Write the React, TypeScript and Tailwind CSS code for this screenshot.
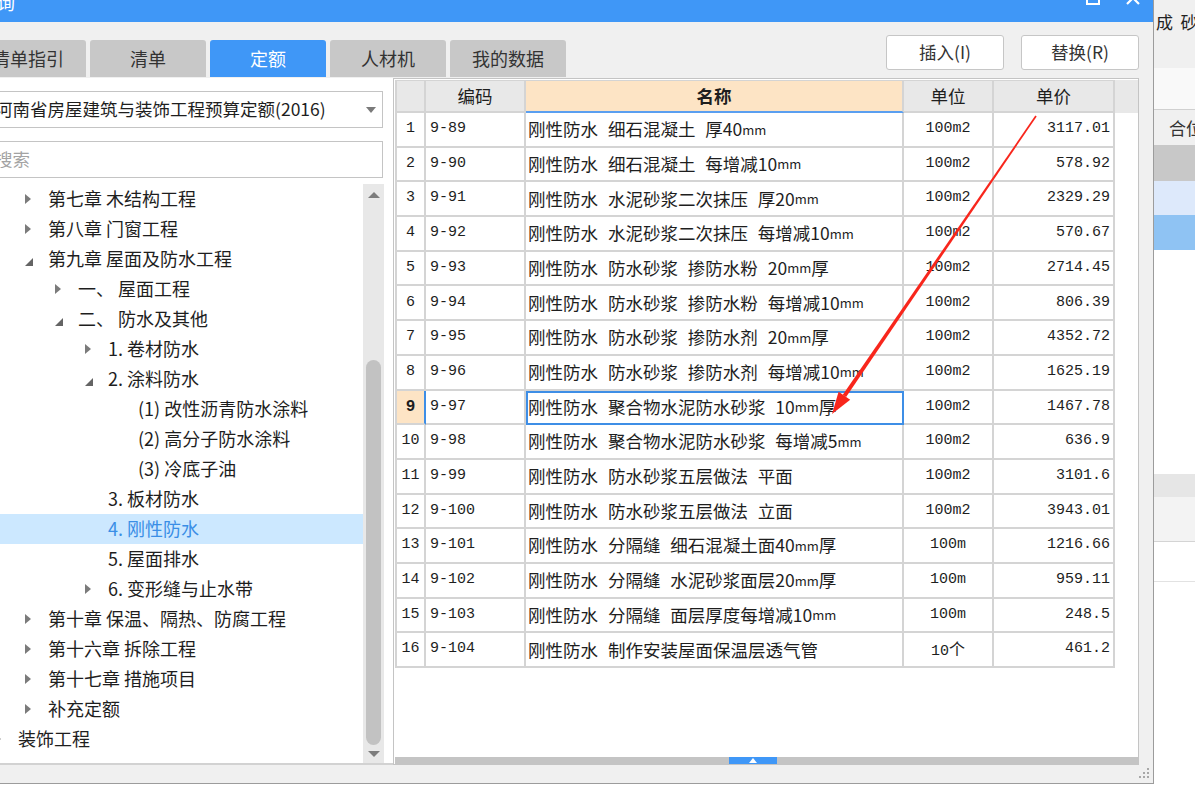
import React from "react";

type TreeNode = { level: number; arrow: "" | "r" | "d"; text: string; selected?: boolean };

const tree: TreeNode[] = [
  { level: 1, arrow: "r", text: "第七章 木结构工程" },
  { level: 1, arrow: "r", text: "第八章 门窗工程" },
  { level: 1, arrow: "d", text: "第九章 屋面及防水工程" },
  { level: 2, arrow: "r", text: "一、 屋面工程" },
  { level: 2, arrow: "d", text: "二、 防水及其他" },
  { level: 3, arrow: "r", text: "1. 卷材防水" },
  { level: 3, arrow: "d", text: "2. 涂料防水" },
  { level: 4, arrow: "", text: "(1) 改性沥青防水涂料" },
  { level: 4, arrow: "", text: "(2) 高分子防水涂料" },
  { level: 4, arrow: "", text: "(3) 冷底子油" },
  { level: 3, arrow: "", text: "3. 板材防水" },
  { level: 3, arrow: "", text: "4. 刚性防水", selected: true },
  { level: 3, arrow: "", text: "5. 屋面排水" },
  { level: 3, arrow: "r", text: "6. 变形缝与止水带" },
  { level: 1, arrow: "r", text: "第十章 保温、隔热、防腐工程" },
  { level: 1, arrow: "r", text: "第十六章 拆除工程" },
  { level: 1, arrow: "r", text: "第十七章 措施项目" },
  { level: 1, arrow: "r", text: "补充定额" },
  { level: 0, arrow: "r", text: "装饰工程" },
];

const padByLevel: Record<number, string> = {
  0: "ml-[-6px]",
  1: "pl-[24px]",
  2: "pl-[54px]",
  3: "pl-[84px]",
  4: "pl-[114px]",
};

type Row = { n: number; code: string; name: string; unit: string; price: string };

const rows: Row[] = [
  { n: 1, code: "9-89", name: "刚性防水 细石混凝土 厚40mm", unit: "100m2", price: "3117.01" },
  { n: 2, code: "9-90", name: "刚性防水 细石混凝土 每增减10mm", unit: "100m2", price: "578.92" },
  { n: 3, code: "9-91", name: "刚性防水 水泥砂浆二次抹压 厚20mm", unit: "100m2", price: "2329.29" },
  { n: 4, code: "9-92", name: "刚性防水 水泥砂浆二次抹压 每增减10mm", unit: "100m2", price: "570.67" },
  { n: 5, code: "9-93", name: "刚性防水 防水砂浆 掺防水粉 20mm厚", unit: "100m2", price: "2714.45" },
  { n: 6, code: "9-94", name: "刚性防水 防水砂浆 掺防水粉 每增减10mm", unit: "100m2", price: "806.39" },
  { n: 7, code: "9-95", name: "刚性防水 防水砂浆 掺防水剂 20mm厚", unit: "100m2", price: "4352.72" },
  { n: 8, code: "9-96", name: "刚性防水 防水砂浆 掺防水剂 每增减10mm", unit: "100m2", price: "1625.19" },
  { n: 9, code: "9-97", name: "刚性防水 聚合物水泥防水砂浆 10mm厚", unit: "100m2", price: "1467.78" },
  { n: 10, code: "9-98", name: "刚性防水 聚合物水泥防水砂浆 每增减5mm", unit: "100m2", price: "636.9" },
  { n: 11, code: "9-99", name: "刚性防水 防水砂浆五层做法 平面", unit: "100m2", price: "3101.6" },
  { n: 12, code: "9-100", name: "刚性防水 防水砂浆五层做法 立面", unit: "100m2", price: "3943.01" },
  { n: 13, code: "9-101", name: "刚性防水 分隔缝 细石混凝土面40mm厚", unit: "100m", price: "1216.66" },
  { n: 14, code: "9-102", name: "刚性防水 分隔缝 水泥砂浆面层20mm厚", unit: "100m", price: "959.11" },
  { n: 15, code: "9-103", name: "刚性防水 分隔缝 面层厚度每增减10mm", unit: "100m", price: "248.5" },
  { n: 16, code: "9-104", name: "刚性防水 制作安装屋面保温层透气管", unit: "10个", price: "461.2" },
];

function renderName(s: string) {
  return s.split(/(mm)/).map((p, i) =>
    p === "mm" ? (
      <span key={i} className="text-[13px]">
        mm
      </span>
    ) : (
      <span key={i}>{p}</span>
    )
  );
}

function TreeArrow({ kind }: { kind: string }) {
  if (kind === "r")
    return (
      <svg width="6" height="10" viewBox="0 0 6 10">
        <polygon points="0,0 6,5 0,10" fill="#7b7b7b" />
      </svg>
    );
  if (kind === "d")
    return (
      <svg width="8" height="8" viewBox="0 0 8 8" className="mt-[5px]">
        <polygon points="8,0 8,8 0,8" fill="#646464" />
      </svg>
    );
  return null;
}

const tabs = [
  { label: "清单指引", active: false },
  { label: "清单", active: false },
  { label: "定额", active: true },
  { label: "人材机", active: false },
  { label: "我的数据", active: false },
];

const mono = "font-['Liberation_Mono',monospace]";

export default function App() {
  return (
    <div className="relative w-[1195px] h-[804px] overflow-hidden bg-white flex font-['Noto_Sans_CJK_SC',sans-serif] text-[#1e1e1e]">
      {/* dialog */}
      <div className="w-[1154px] h-[784px] shrink-0 flex flex-col bg-[#f0f0f0] border-r border-b border-[#9c9c9c]">
        {/* title bar */}
        <div className="h-[22px] shrink-0 bg-[#3f97f7] flex justify-between overflow-hidden">
          <span className="text-white text-[18px] leading-[18px] mt-[-7px] ml-[-21px] whitespace-nowrap">查询</span>
          <div className="flex items-start gap-[26px] mr-[13px]">
            <div className="w-[14px] h-[13px] border-2 border-white mt-[-8px]" />
            <svg width="14" height="14" viewBox="0 0 14 14" className="mt-[-9px]">
              <path d="M1 1 L13 13 M13 1 L1 13" stroke="white" strokeWidth="2.2" />
            </svg>
          </div>
        </div>

        {/* tabs and buttons */}
        <div className="h-[56px] shrink-0 flex justify-between items-start">
          <div className="flex gap-[4px] ml-[-30px] mt-[18px]">
            {tabs.map((t) => (
              <div
                key={t.label}
                className={
                  t.active
                    ? "w-[116px] h-[37px] rounded-t-[3px] bg-[#3f97f7] text-white text-[18px] flex items-center justify-center"
                    : "w-[116px] h-[37px] rounded-t-[3px] bg-[#c8c8c8] text-[#333] text-[18px] flex items-center justify-center"
                }
              >
                {t.label}
              </div>
            ))}
          </div>
          <div className="flex gap-[17px] mt-[13px] mr-[14px]">
            <div className="w-[118px] h-[35px] bg-white border border-[#c6c6c6] rounded-[3px] flex items-center justify-center text-[17.5px] text-[#333]">
              插入(I)
            </div>
            <div className="w-[118px] h-[35px] bg-white border border-[#c6c6c6] rounded-[3px] flex items-center justify-center text-[17.5px] text-[#333]">
              替换(R)
            </div>
          </div>
        </div>

        {/* main */}
        <div className="h-[687px] shrink-0 flex">
          {/* left panel */}
          <div className="w-[393px] shrink-0 bg-white flex flex-col border-b-2 border-[#d2d2d2]">
            <div className="mt-[13px] ml-[-10px] w-[393px] h-[37px] shrink-0 border border-[#c4c4c4] bg-white flex items-center justify-between pl-[4px] pr-[6px]">
              <span className="text-[17.5px] whitespace-nowrap">河南省房屋建筑与装饰工程预算定额(2016)</span>
              <svg width="10" height="6" viewBox="0 0 10 6">
                <polygon points="0,0 10,0 5,6" fill="#7a7a7a" />
              </svg>
            </div>
            <div className="mt-[13px] ml-[-10px] w-[393px] h-[37px] shrink-0 border border-[#c4c4c4] bg-white flex items-center pl-[4px]">
              <span className="text-[17.5px] text-[#a3a3a3]">搜索</span>
            </div>
            <div className="mt-[6px] flex-1 flex min-h-0">
              <div className="w-[363px] shrink-0 flex flex-col overflow-hidden">
                {tree.map((n, i) => (
                  <div
                    key={i}
                    className={
                      n.selected
                        ? "h-[30px] shrink-0 flex items-center bg-[#cce8ff] text-[#3a8ee6] " + padByLevel[n.level]
                        : "h-[30px] shrink-0 flex items-center " + padByLevel[n.level]
                    }
                  >
                    <div className="w-[24px] shrink-0 flex items-center pl-[1px]">
                      <TreeArrow kind={n.arrow} />
                    </div>
                    <span className="text-[18px] leading-[24px] mt-[-2px] whitespace-pre">{n.text}</span>
                  </div>
                ))}
              </div>
              <div className="w-[21px] shrink-0 bg-[#e8e8e8] flex flex-col items-center">
                <div className="h-[14px] shrink-0 flex items-end">
                  <svg width="12" height="6" viewBox="0 0 12 6">
                    <polygon points="0,6 12,6 6,0" fill="#7c7c7c" />
                  </svg>
                </div>
                <div className="mt-[162px] w-[15px] h-[385px] shrink-0 rounded-full bg-[#c2c2c2]" />
                <div className="flex-1 flex items-center">
                  <svg width="12" height="6" viewBox="0 0 12 6">
                    <polygon points="0,0 12,0 6,6" fill="#7c7c7c" />
                  </svg>
                </div>
              </div>
            </div>
          </div>

          {/* table region */}
          <div className="w-[746px] shrink-0 bg-white border border-[#c4c4c4] flex flex-col pl-[1px] pt-[1px]">
            <div className="flex flex-col flex-1">
              {/* header */}
              <div className="flex h-[33px] shrink-0 bg-[#e8e8e8] text-[17.5px]">
                <div className="w-[31px] shrink-0 border-l-2 border-r-2 border-b-2 border-t border-[#d4d4d4]" />
                <div className="w-[100px] shrink-0 border-r-2 border-b-2 border-t border-[#d4d4d4] flex items-center justify-center">
                  编码
                </div>
                <div className="w-[378px] shrink-0 bg-[#fde4c5] border-r-2 border-t border-[#d4d4d4] border-b-2 border-b-[#5a9ff0] flex items-center justify-center font-bold">
                  名称
                </div>
                <div className="w-[90px] shrink-0 border-r-2 border-b-2 border-t border-[#d4d4d4] flex items-center justify-center">
                  单位
                </div>
                <div className="w-[121px] shrink-0 border-r-2 border-b-2 border-t border-[#d4d4d4] flex items-center justify-center">
                  单价
                </div>
              </div>
              {rows.map((r) => {
                const sel = r.n === 9;
                return (
                  <div key={r.n} className="flex h-[34.7px] shrink-0 bg-white">
                    <div
                      className={
                        sel
                          ? `w-[31px] shrink-0 border-l-2 border-b-2 border-[#d4d4d4] border-r-2 border-r-[#3e8ee6] bg-[#fde4c5] flex items-center justify-center font-bold text-[16px] ${mono}`
                          : `w-[31px] shrink-0 border-l-2 border-r-2 border-b-2 border-[#d4d4d4] flex items-center justify-center text-[15px] ${mono}`
                      }
                    >
                      {r.n}
                    </div>
                    <div className={`w-[100px] shrink-0 border-r-2 border-b-2 border-[#d4d4d4] flex items-center pl-[4px] text-[15px] ${mono}`}>
                      {r.code}
                    </div>
                    <div
                      className={
                        sel
                          ? "w-[378px] shrink-0 border-r-2 border-b-2 border-[#d4d4d4] flex items-center pl-[2px] text-[17.5px] whitespace-pre [word-spacing:6px] outline-2 outline-[#3e8ee6] -outline-offset-2"
                          : "w-[378px] shrink-0 border-r-2 border-b-2 border-[#d4d4d4] flex items-center pl-[2px] text-[17.5px] whitespace-pre [word-spacing:6px]"
                      }
                    >
                      {renderName(r.name)}
                    </div>
                    <div className={`w-[90px] shrink-0 border-r-2 border-b-2 border-[#d4d4d4] flex items-center justify-center text-[15px] ${mono}`}>
                      {r.unit === "10个" ? (
                        <span>
                          10<span className="font-['Noto_Sans_CJK_SC',sans-serif] text-[16px]">个</span>
                        </span>
                      ) : (
                        r.unit
                      )}
                    </div>
                    <div className={`w-[121px] shrink-0 border-r-2 border-b-2 border-[#d4d4d4] flex items-center justify-end pr-[3px] text-[15px] ${mono}`}>
                      {r.price}
                    </div>
                  </div>
                );
              })}
            </div>
            {/* horizontal scrollbar */}
            <div className="h-[7px] shrink-0 bg-[#c4c4c4] flex">
              <div className="ml-[334px] w-[48px] h-[7px] bg-[#3f97f7] flex items-center justify-center">
                <svg width="8" height="5" viewBox="0 0 8 5">
                  <polygon points="0,5 8,5 4,0" fill="white" />
                </svg>
              </div>
            </div>
          </div>
        </div>

        {/* bottom strip */}
        <div className="flex-1 flex justify-end items-end pr-[3px] pb-[4px]">
          <svg width="12" height="12" viewBox="0 0 12 12">
            <g fill="#a8a8a8">
              <rect x="9" y="1" width="2" height="2" />
              <rect x="5" y="5" width="2" height="2" />
              <rect x="9" y="5" width="2" height="2" />
              <rect x="1" y="9" width="2" height="2" />
              <rect x="5" y="9" width="2" height="2" />
              <rect x="9" y="9" width="2" height="2" />
            </g>
          </svg>
        </div>
      </div>

      {/* right outside column */}
      <div className="flex-1 flex flex-col">
        <div className="h-[68px] shrink-0 bg-[#f0f0f0] pt-[13px] pl-[2px] text-[17px] leading-[18px] whitespace-pre text-[#222]">
          成  砂
        </div>
        <div className="h-[42px] shrink-0 bg-[#f9f9f9] border-b border-[#d0d0d0]" />
        <div className="h-[35px] shrink-0 bg-[#f0f0f0] flex items-center pl-[15px] text-[17px] whitespace-nowrap text-[#333]">
          合位
        </div>
        <div className="h-[36px] shrink-0 bg-[#c8c8c8]" />
        <div className="h-[34px] shrink-0 bg-[#dde9fb]" />
        <div className="h-[35px] shrink-0 bg-[#8fc3f3]" />
        <div className="h-[224px] shrink-0 bg-white" />
        <div className="h-[23px] shrink-0 bg-[#e6e6e6]" />
        <div className="h-[45px] shrink-0 bg-[#f3f3f3] border-b border-[#d4d4d4]" />
        <div className="h-[40px] shrink-0 bg-white border-b border-[#e2e2e2]" />
        <div className="flex-1 bg-white" />
      </div>

      {/* red annotation arrow */}
      <svg className="absolute inset-0 pointer-events-none" width="1195" height="804" viewBox="0 0 1195 804">
        <polygon points="1036.7,116.4 846.1,396.9 842.8,394.7 1035.3,115.6" fill="#f8261c" />
        <polygon points="832,414 850.2,399.8 838.6,391.8" fill="#f8261c" />
      </svg>
    </div>
  );
}
